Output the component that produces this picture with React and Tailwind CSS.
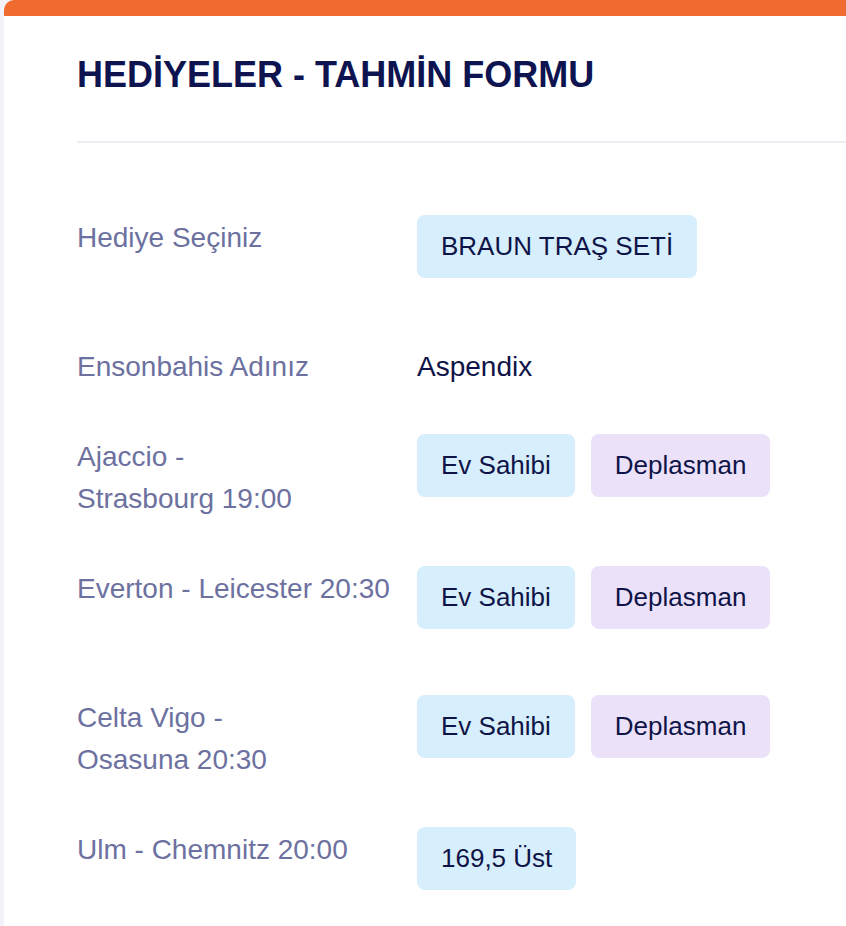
const matches = [
  { label: ["Ajaccio -", "Strasbourg 19:00"], options: ["Ev Sahibi", "Deplasman"] },
  { label: ["Everton - Leicester 20:30"], options: ["Ev Sahibi", "Deplasman"] },
  { label: ["Celta Vigo -", "Osasuna 20:30"], options: ["Ev Sahibi", "Deplasman"] },
  { label: ["Ulm - Chemnitz 20:00"], options: ["169,5 Üst"] },
];

function Choice({ text, tone = "blue" }) {
  const bg = tone === "blue" ? "bg-[#d7eefc]" : "bg-[#ebe2fa]";
  return (
    <div
      className={`${bg} h-[63px] px-6 rounded-[8px] flex items-center text-[26px] text-[#0f1448] whitespace-nowrap`}
    >
      {text}
    </div>
  );
}

function Row({ label, children }) {
  const lines = Array.isArray(label) ? label : [label];
  return (
    <div className="flex items-start">
      <div className="w-[320px] mr-5 pt-[2px] text-[28px] leading-[42px] text-[#6c71a0]">
        {lines.map((l, i) => (
          <div key={i}>{l}</div>
        ))}
      </div>
      <div className="flex-1">{children}</div>
    </div>
  );
}

export default function App() {
  return (
    <div
      className="min-h-screen bg-[#f3f2fb] pl-[4px]"
      style={{ fontFamily: '"Liberation Sans", Arial, sans-serif' }}
    >
      <div className="min-h-screen bg-white rounded-tl-[10px] border-t-[16px] border-[#f06b2f] pl-[73px] pb-10">
        <h1 className="pt-[37px] text-[36px] leading-[43px] font-bold text-[#0d1450]">
          HEDİYELER - TAHMİN FORMU
        </h1>
        <div className="mt-[45px] h-[2px] bg-[#ececf2]" />

        <div className="mt-[72px] flex flex-col gap-[46px]">
          <Row label="Hediye Seçiniz">
            <div className="flex pb-5">
              <Choice text="BRAUN TRAŞ SETİ" />
            </div>
          </Row>

          <Row label="Ensonbahis Adınız">
            <div className="pt-[2px] text-[28px] leading-[42px] text-[#0f1448]">Aspendix</div>
          </Row>

          {matches.map((m, i) => (
            <Row key={i} label={m.label}>
              <div className="flex gap-4 pb-5">
                {m.options.map((o, j) => (
                  <Choice key={j} text={o} tone={j === 0 ? "blue" : "purple"} />
                ))}
              </div>
            </Row>
          ))}
        </div>
      </div>
    </div>
  );
}
